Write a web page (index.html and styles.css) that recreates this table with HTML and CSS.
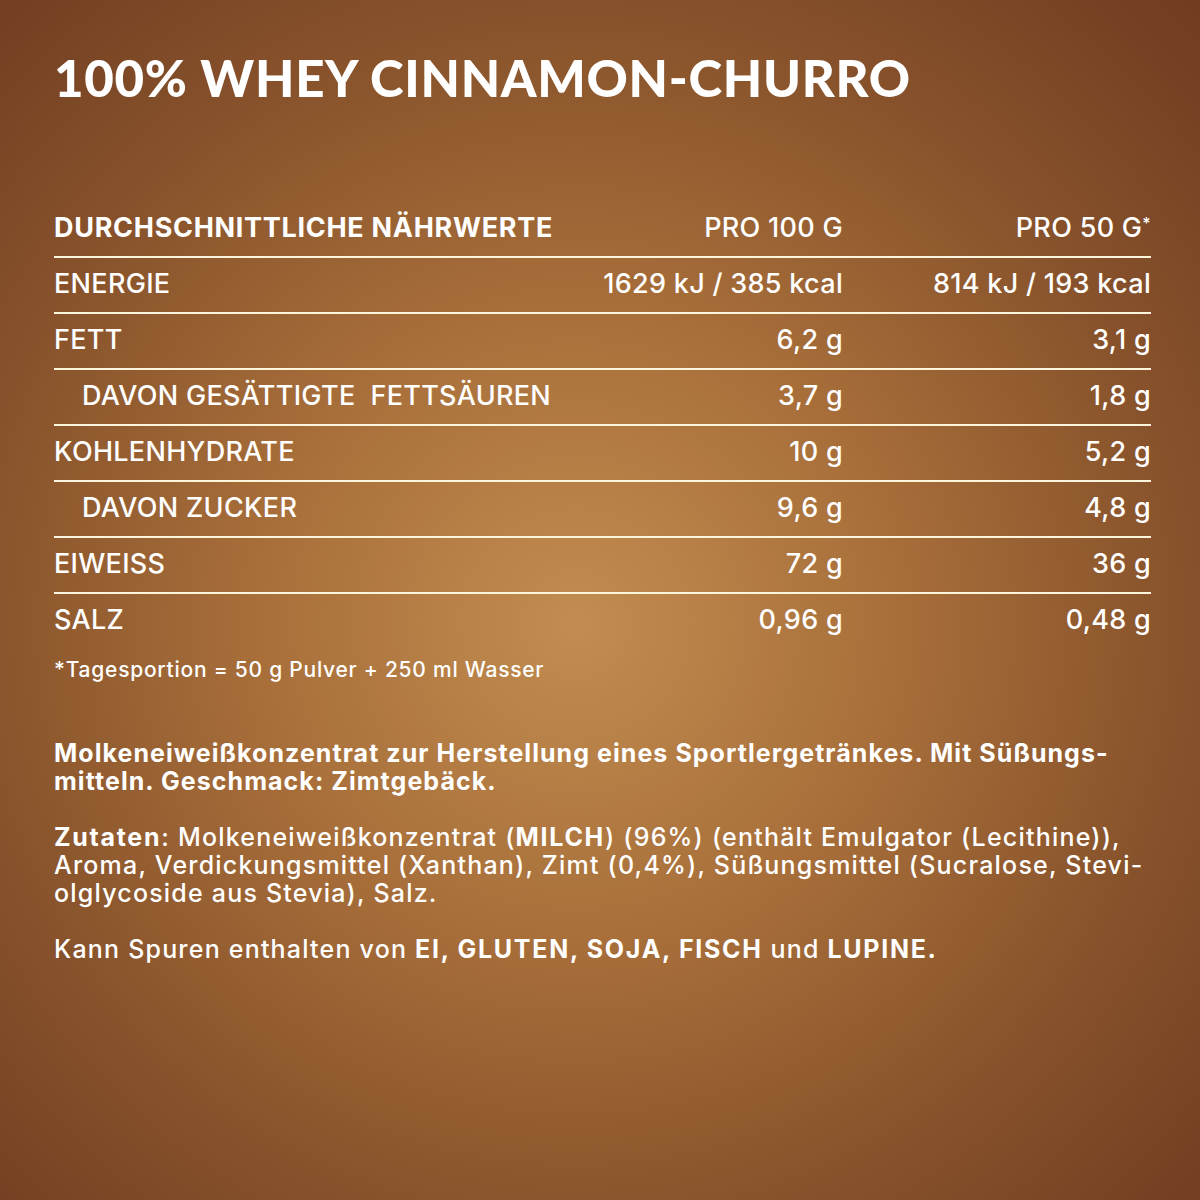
FILE: index.html
```html
<!DOCTYPE html>
<html lang="de">
<head>
<meta charset="utf-8">
<link rel="stylesheet" href="styles.css">
</head>
<body>
<main class="page">
  <h1 class="title">100% WHEY CINNAMON-CHURRO</h1>
  <div class="table">
    <div class="row head">
      <span class="label">DURCHSCHNITTLICHE NÄHRWERTE</span>
      <span class="val">PRO 100 G</span>
      <span class="val">PRO 50 G<sup>*</sup></span>
    </div>
    <div class="row">
      <span class="label">ENERGIE</span>
      <span class="val">1629 kJ / 385 kcal</span>
      <span class="val">814 kJ / 193 kcal</span>
    </div>
    <div class="row">
      <span class="label">FETT</span>
      <span class="val">6,2 g</span>
      <span class="val">3,1 g</span>
    </div>
    <div class="row">
      <span class="label sub">DAVON GESÄTTIGTE&nbsp; FETTSÄUREN</span>
      <span class="val">3,7 g</span>
      <span class="val">1,8 g</span>
    </div>
    <div class="row">
      <span class="label">KOHLENHYDRATE</span>
      <span class="val">10 g</span>
      <span class="val">5,2 g</span>
    </div>
    <div class="row">
      <span class="label sub">DAVON ZUCKER</span>
      <span class="val">9,6 g</span>
      <span class="val">4,8 g</span>
    </div>
    <div class="row">
      <span class="label">EIWEISS</span>
      <span class="val">72 g</span>
      <span class="val">36 g</span>
    </div>
    <div class="row last">
      <span class="label">SALZ</span>
      <span class="val">0,96 g</span>
      <span class="val">0,48 g</span>
    </div>
  </div>
  <p class="note">*Tagesportion = 50 g Pulver + 250 ml Wasser</p>
  <p class="desc">Molkeneiweißkonzentrat zur Herstellung eines Sportlergetränkes. Mit Süßungs-<br>mitteln. Geschmack: Zimtgebäck.</p>
  <p class="text"><b>Zutaten</b>: Molkeneiweißkonzentrat (<b>MILCH</b>) (96%) (enthält Emulgator (Lecithine)),<br>Aroma, Verdickungsmittel (Xanthan), Zimt (0,4%), Süßungsmittel (Sucralose, Stevi-<br>olglycoside aus Stevia), Salz.</p>
  <p class="text"><span>Kann Spuren enthalten von </span><b>EI, GLUTEN, SOJA, FISCH</b> und <b>LUPINE.</b></p>
</main>
</body>
</html>
```

FILE: styles.css
```css
html, body {
  margin: 0;
  padding: 0;
}
body {
  width: 1200px;
  height: 1200px;
  overflow: hidden;
  font-family: Inter, Lato, sans-serif;
  color: #fff;
}
.page {
  box-sizing: border-box;
  width: 1200px;
  height: 1200px;
  padding: 52px 49px 0 54px;
  background:
    radial-gradient(ellipse 75% 75% at 48% 52%, #c28d50 0%, #a86f3a 35%, #85502a 70%, #6f3a1f 100%);
}
.title {
  margin: 0;
  font-family: Lato, sans-serif;
  font-size: 51px;
  font-weight: 900;
  line-height: 52px;
  letter-spacing: 0.7px;
}
.table {
  margin-top: 98px;
  display: flex;
  flex-direction: column;
}
.row {
  display: grid;
  grid-template-columns: minmax(0, 1fr) 300px 308px;
  align-items: center;
  height: 50px;
  padding-bottom: 4px;
  border-bottom: 2px solid #fdf5dc;
  font-size: 27px;
  font-weight: 500;
  letter-spacing: 0.3px;
  white-space: nowrap;
}
.row.last {
  border-bottom: none;
}
.row.head {
  font-weight: 700;
}
.row.head .label {
  letter-spacing: 0.7px;
}
.row.head .val {
  font-weight: 500;
}
.label.sub {
  padding-left: 28px;
}
.val {
  text-align: right;
}
sup {
  font-size: 16px;
  vertical-align: 8px;
  line-height: 0;
}
.note {
  margin: 10px 0 0;
  font-size: 21px;
  line-height: 24px;
  font-weight: 500;
  letter-spacing: 0.75px;
}
.desc {
  margin: 57px 0 0;
  font-size: 25px;
  font-weight: 700;
  line-height: 28px;
  letter-spacing: 1.05px;
}
.text {
  margin: 28px 0 0;
  font-size: 25px;
  font-weight: 500;
  line-height: 28px;
  letter-spacing: 1.2px;
}
.text b {
  font-weight: 700;
  letter-spacing: 1.7px;
}
```
